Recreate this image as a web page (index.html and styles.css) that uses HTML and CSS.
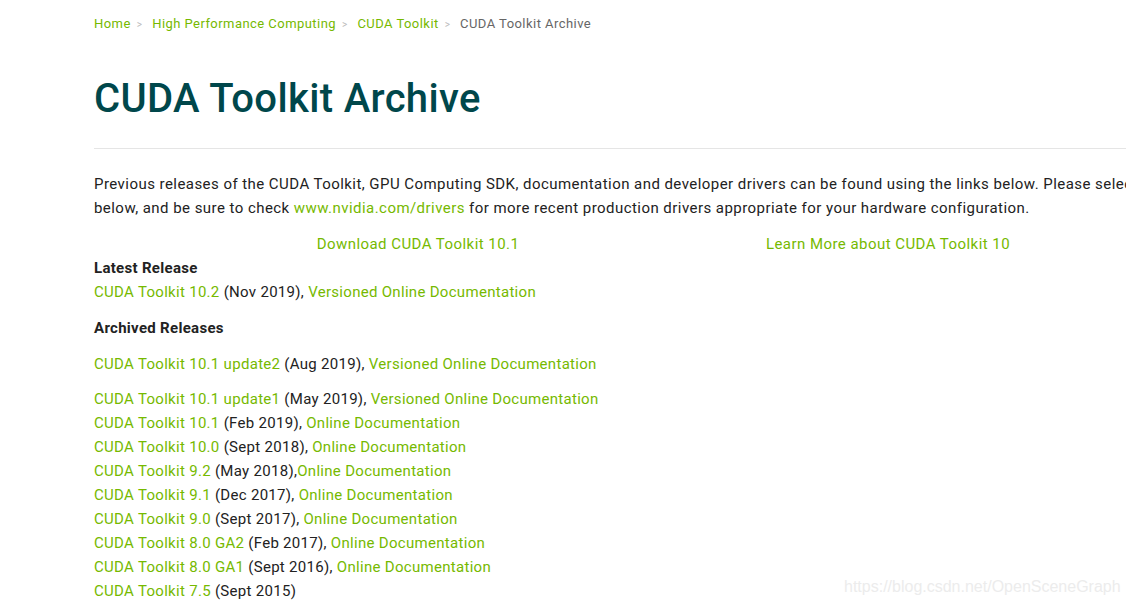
FILE: index.html
```html
<!DOCTYPE html>
<html>
<head>
<meta charset="utf-8">
<link rel="stylesheet" href="styles.css">
</head>
<body>
<div class="page">
  <nav class="crumbs">
    <a href="#">Home</a><span class="sep">&gt;</span>
    <a href="#">High Performance Computing</a><span class="sep">&gt;</span>
    <a href="#">CUDA Toolkit</a><span class="sep">&gt;</span>
    <span class="current">CUDA Toolkit Archive</span>
  </nav>
  <h1 class="title">CUDA Toolkit Archive</h1>
  <hr class="rule">
  <p class="intro">Previous releases of the CUDA Toolkit, GPU Computing SDK, documentation and developer drivers can be found using the links below. Please select the release you want from the list<br>below, and be sure to check <a href="#">www.nvidia.com/drivers</a> for more recent production drivers appropriate for your hardware configuration.</p>
  <div class="promo">
    <div class="promo-cell promo-a"><a href="#">Download CUDA Toolkit 10.1</a></div>
    <div class="promo-cell promo-b"><a href="#">Learn More about CUDA Toolkit 10</a></div>
  </div>
  <h4 class="head">Latest Release</h4>
  <div class="row"><a href="#">CUDA Toolkit 10.2</a> (Nov 2019), <a href="#">Versioned Online Documentation</a></div>
  <h4 class="head head-archived">Archived Releases</h4>
  <div class="row row-spaced"><a href="#">CUDA Toolkit 10.1 update2</a> (Aug 2019), <a href="#">Versioned Online Documentation</a></div>
  <div class="row row-gap"><a href="#">CUDA Toolkit 10.1 update1</a> (May 2019), <a href="#">Versioned Online Documentation</a></div>
  <div class="row"><a href="#">CUDA Toolkit 10.1</a> (Feb 2019), <a href="#">Online Documentation</a></div>
  <div class="row"><a href="#">CUDA Toolkit 10.0</a> (Sept 2018), <a href="#">Online Documentation</a></div>
  <div class="row"><a href="#">CUDA Toolkit 9.2</a> (May 2018),<a href="#">Online Documentation</a></div>
  <div class="row"><a href="#">CUDA Toolkit 9.1</a> (Dec 2017), <a href="#">Online Documentation</a></div>
  <div class="row"><a href="#">CUDA Toolkit 9.0</a> (Sept 2017), <a href="#">Online Documentation</a></div>
  <div class="row"><a href="#">CUDA Toolkit 8.0 GA2</a> (Feb 2017), <a href="#">Online Documentation</a></div>
  <div class="row"><a href="#">CUDA Toolkit 8.0 GA1</a> (Sept 2016), <a href="#">Online Documentation</a></div>
  <div class="row"><a href="#">CUDA Toolkit 7.5</a> (Sept 2015)</div>
</div>
<div class="watermark">https://blog.csdn.net/OpenSceneGraph</div>
</body>
</html>
```
FILE: styles.css
```css
html, body {
  margin: 0;
  padding: 0;
  background: #fff;
  overflow: hidden;
  height: 605px;
}
body {
  font-family: Roboto, "Liberation Sans", sans-serif;
  color: #222;
  width: 1126px;
  position: relative;
  letter-spacing: 0.45px;
}
a {
  color: #76b900;
  text-decoration: none;
}
.page {
  padding: 15px 0 0 94px;
  width: 1500px;
}
.crumbs {
  font-size: 13px;
  line-height: 18px;
  color: #666;
  white-space: nowrap;
}
.crumbs .sep {
  color: #bbb;
  font-size: 10px;
  margin: 0 6px 0 6px;
}
.crumbs .current {
  color: #666;
}
.title {
  margin: 41px 0 0 0;
  font-size: 40px;
  line-height: 48px;
  font-weight: 500;
  letter-spacing: 0.35px;
  color: #00474b;
}
.rule {
  border: 0;
  border-top: 1px solid #e5e5e5;
  margin: 25px 0 0 0;
}
.intro {
  margin: 23px 0 0 0;
  font-size: 15px;
  line-height: 24px;
  white-space: nowrap;
}
.promo {
  display: flex;
  margin-top: 12px;
  font-size: 15px;
  line-height: 24px;
}
.promo-cell {
  text-align: center;
}
.promo-a { width: 648px; }
.promo-b { width: 292px; }
.head {
  margin: 0;
  font-size: 15px;
  line-height: 24px;
  font-weight: 700;
  letter-spacing: 0.3px;
}
.head-archived {
  margin-top: 12px;
}
.row {
  font-size: 15px;
  line-height: 24px;
  letter-spacing: 0.3px;
}
.row-spaced { margin-top: 12px; }
.row-gap { margin-top: 11px; }
.watermark {
  position: absolute;
  left: 844px;
  top: 578px;
  font-family: "Liberation Sans", Arial, sans-serif;
  font-size: 16px;
  letter-spacing: 0;
  color: #ececec;
}
```
